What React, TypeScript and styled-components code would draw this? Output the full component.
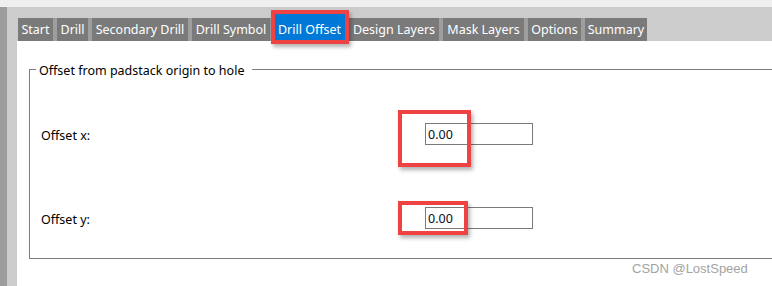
import React from "react";
import styled, { createGlobalStyle } from "styled-components";

const GlobalStyle = createGlobalStyle`
  html, body { margin: 0; padding: 0; background: #efefef; }
  body { font-family: "Noto Sans", "Open Sans", sans-serif; font-size: 12.5px; color: #000; }
  * { box-sizing: border-box; }
`;

const Screen = styled.div`
  position: relative;
  width: 772px;
  height: 286px;
  overflow: hidden;
  padding-top: 7px;
  display: flex;
  flex-direction: column;
  background: #efefef;
`;

const Window = styled.div`
  flex: 1;
  display: flex;
  min-height: 0;
`;

const LeftEdge = styled.div`
  width: 7px;
  background: #9d9d9d;
`;

const Frame = styled.div`
  flex: 1;
  min-width: 0;
  display: flex;
  flex-direction: column;
  background: #cccccc;
  padding: 11px 0 0 10px;
`;

const TabStrip = styled.div`
  display: flex;
  align-self: flex-start;
  height: 23px;
  margin-left: 1px;
  gap: 4px;
  background: #9e9e9e;
`;

const Tab = styled.div<{ $active?: boolean; $w: number }>`
  width: ${(p) => p.$w}px;
  display: flex;
  align-items: center;
  justify-content: center;
  white-space: nowrap;
  font-size: 12.5px;
  line-height: 16px;
  color: #ffffff;
  background: ${(p) => (p.$active ? "#0078d7" : "#7a7a7a")};
  margin-top: ${(p) => (p.$active ? "-4px" : "0")};
  padding-top: ${(p) => (p.$active ? "4px" : "1px")};
`;

const Page = styled.div`
  flex: 1;
  background: #ffffff;
  padding: 28px 0 0 12px;
  overflow: hidden;
`;

const GroupBox = styled.div`
  border: 1px solid #7d7d7d;
  margin-right: -40px;
`;

const Legend = styled.div`
  width: fit-content;
  margin: -7px 0 0 6px;
  padding: 0 8px 0 3px;
  background: #ffffff;
  line-height: 16px;
  font-size: 12.5px;
`;

const Fields = styled.div`
  display: grid;
  grid-template-columns: 384px 108px;
  grid-auto-rows: 22px;
  row-gap: 62px;
  padding: 44px 0 29px 11px;
`;

const Label = styled.label`
  align-self: start;
  margin-top: 5px;
  line-height: 16px;
  font-size: 12.5px;
`;

const Field = styled.input`
  width: 108px;
  height: 22px;
  border: 1px solid #7a7a7a;
  padding: 1px 2px 0;
  font-family: inherit;
  font-size: 12.5px;
  color: #0a0a20;
  background: #fff;
  outline: none;
`;

const Highlight = styled.div`
  position: absolute;
  border: 4px solid #ef4242;
  box-shadow: 2px 3px 4px rgba(0, 0, 0, 0.3);
  pointer-events: none;
`;

const Watermark = styled.div`
  position: absolute;
  left: 632px;
  top: 260px;
  font-family: "Liberation Sans", Arial, sans-serif;
  font-size: 13px;
  line-height: 18px;
  color: #a3a3a3;
  white-space: nowrap;
`;

const tabs: { label: string; w: number; active?: boolean }[] = [
  { label: "Start", w: 35 },
  { label: "Drill", w: 31 },
  { label: "Secondary Drill", w: 96 },
  { label: "Drill Symbol", w: 78 },
  { label: "Drill Offset", w: 71, active: true },
  { label: "Design Layers", w: 90 },
  { label: "Mask Layers", w: 81 },
  { label: "Options", w: 53 },
  { label: "Summary", w: 62 },
];

const boxes = [
  { left: 271, top: 10, width: 78, height: 34 },
  { left: 398, top: 110, width: 73, height: 57 },
  { left: 398, top: 201, width: 70, height: 34 },
];

export default function App() {
  return (
    <>
      <GlobalStyle />
      <Screen>
        <Window>
          <LeftEdge />
          <Frame>
            <TabStrip>
              {tabs.map((t) => (
                <Tab key={t.label} $w={t.w} $active={t.active}>
                  {t.label}
                </Tab>
              ))}
            </TabStrip>
            <Page>
              <GroupBox>
                <Legend>Offset from padstack origin to hole</Legend>
                <Fields>
                  <Label htmlFor="ox">Offset x:</Label>
                  <Field id="ox" readOnly value="0.00" />
                  <Label htmlFor="oy">Offset y:</Label>
                  <Field id="oy" readOnly value="0.00" />
                </Fields>
              </GroupBox>
            </Page>
          </Frame>
        </Window>
        {boxes.map((b, i) => (
          <Highlight key={i} style={{ left: b.left, top: b.top, width: b.width, height: b.height }} />
        ))}
        <Watermark>CSDN @LostSpeed</Watermark>
      </Screen>
    </>
  );
}
